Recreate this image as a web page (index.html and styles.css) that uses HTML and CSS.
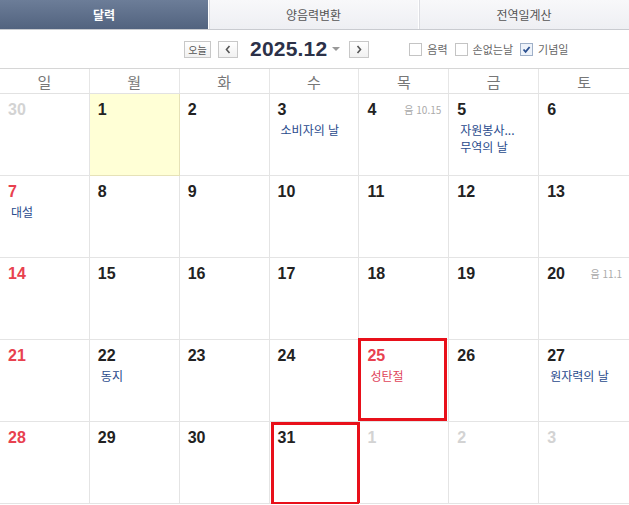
FILE: index.html
```html
<!DOCTYPE html>
<html lang="ko">
<head>
<meta charset="utf-8">
<link rel="stylesheet" href="styles.css">
</head>
<body>
<div class="tabs">
  <div class="tab active">달력</div>
  <div class="tab">양음력변환</div>
  <div class="tab">전역일계산</div>
</div>
<div class="toolbar">
  <button class="btn today">오늘</button>
  <button class="btn arrow"><svg width="8" height="9" viewBox="0 0 8 9"><path d="M5.5 1 L2.5 4.5 L5.5 8" fill="none" stroke="#555" stroke-width="1.6"/></svg></button>
  <div class="title">2025.12</div>
  <span class="caret"></span>
  <button class="btn arrow next"><svg width="8" height="9" viewBox="0 0 8 9"><path d="M2.5 1 L5.5 4.5 L2.5 8" fill="none" stroke="#555" stroke-width="1.6"/></svg></button>
  <label class="chk first"><span class="box"></span>음력</label>
  <label class="chk"><span class="box"></span>손없는날</label>
  <label class="chk"><span class="box on"><svg width="11" height="11" viewBox="0 0 11 11"><path d="M2.5 5.5 L4.6 7.8 L8.6 3" fill="none" stroke="#2a4f8f" stroke-width="1.8"/></svg></span>기념일</label>
</div>
<div class="weekhead">
  <div>일</div><div>월</div><div>화</div><div>수</div><div>목</div><div>금</div><div>토</div>
</div>
<div class="grid">
  <div class="cell"><span class="num other">30</span></div>
  <div class="cell today-cell"><span class="num">1</span></div>
  <div class="cell"><span class="num">2</span></div>
  <div class="cell"><span class="num">3</span><div class="ev">소비자의 날</div></div>
  <div class="cell"><span class="num">4</span><span class="lunar">음 10.15</span></div>
  <div class="cell"><span class="num">5</span><div class="ev">자원봉사...</div><div class="ev">무역의 날</div></div>
  <div class="cell"><span class="num">6</span></div>

  <div class="cell"><span class="num sun">7</span><div class="ev">대설</div></div>
  <div class="cell"><span class="num">8</span></div>
  <div class="cell"><span class="num">9</span></div>
  <div class="cell"><span class="num">10</span></div>
  <div class="cell"><span class="num">11</span></div>
  <div class="cell"><span class="num">12</span></div>
  <div class="cell"><span class="num">13</span></div>

  <div class="cell"><span class="num sun">14</span></div>
  <div class="cell"><span class="num">15</span></div>
  <div class="cell"><span class="num">16</span></div>
  <div class="cell"><span class="num">17</span></div>
  <div class="cell"><span class="num">18</span></div>
  <div class="cell"><span class="num">19</span></div>
  <div class="cell"><span class="num">20</span><span class="lunar">음 11.1</span></div>

  <div class="cell"><span class="num sun">21</span></div>
  <div class="cell"><span class="num">22</span><div class="ev">동지</div></div>
  <div class="cell"><span class="num">23</span></div>
  <div class="cell"><span class="num">24</span></div>
  <div class="cell mark"><span class="num sun">25</span><div class="ev red">성탄절</div></div>
  <div class="cell"><span class="num">26</span></div>
  <div class="cell"><span class="num">27</span><div class="ev">원자력의 날</div></div>

  <div class="cell"><span class="num sun">28</span></div>
  <div class="cell"><span class="num">29</span></div>
  <div class="cell"><span class="num">30</span></div>
  <div class="cell mark2"><span class="num">31</span></div>
  <div class="cell"><span class="num other">1</span></div>
  <div class="cell"><span class="num other">2</span></div>
  <div class="cell"><span class="num other">3</span></div>
</div>
</body>
</html>
```

FILE: styles.css
```css
*, *::before, *::after { box-sizing: border-box; }
body {
  margin: 0;
  width: 629px;
  background: #fff;
  font-family: "Noto Sans CJK KR", "Noto Sans", sans-serif;
  color: #222;
}
.tabs {
  display: grid;
  grid-template-columns: 208px 210px 1fr;
  height: 30px;
  border-bottom: 1px solid #c9cbd0;
}
.tab {
  display: flex;
  align-items: center;
  justify-content: center;
  font-size: 12px;
  color: #555;
  background: linear-gradient(#f8f8fa, #eeeff3);
  border-left: 1px solid #fff;
  box-shadow: inset 1px 0 0 #dcdde2;
}
.tab.active {
  background: linear-gradient(#6c7d98, #52637f);
  color: #fff;
  font-weight: bold;
  border-left: none;
  box-shadow: none;
}
.toolbar {
  display: flex;
  align-items: center;
  height: 38px;
  padding-left: 184px;
}
.btn {
  height: 17px;
  border: 1px solid #c8c8c8;
  background: linear-gradient(#fff, #f1f1f1);
  padding: 0;
  margin: 0;
  font-family: "Noto Sans CJK KR", sans-serif;
  font-size: 10px;
  color: #555;
  display: flex;
  align-items: center;
  justify-content: center;
}
.today { width: 27px; }
.arrow { width: 20px; margin-left: 7px; }
.title {
  margin-left: 12px;
  font-family: "Liberation Sans", Arial, sans-serif;
  font-weight: bold;
  font-size: 21px;
  color: #2c3148;
  letter-spacing: 0.2px;
}
.caret {
  margin-left: 5px;
  width: 0;
  height: 0;
  border-left: 4px solid transparent;
  border-right: 4px solid transparent;
  border-top: 4px solid #999;
}
.next { margin-left: 9px; }
.chk {
  display: flex;
  align-items: center;
  font-size: 11px;
  color: #666;
  margin-left: 7px;
}
.chk.first { margin-left: 40px; }
.box {
  width: 13px;
  height: 13px;
  border: 1px solid #c4c4c4;
  background: #fff;
  margin-right: 5px;
  display: flex;
  align-items: center;
  justify-content: center;
}
.box.on { border-color: #9fb0c8; background: #eef3fa; }
.weekhead {
  display: grid;
  grid-template-columns: repeat(7, 1fr);
  height: 26px;
  border-top: 1px solid #d6d6d6;
  border-bottom: 1px solid #e2e2e2;
}
.weekhead div {
  display: flex;
  align-items: center;
  justify-content: center;
  font-size: 15px;
  color: #777;
  border-right: 1px solid #e6e6e6;
}
.weekhead div:last-child { border-right: none; }
.grid {
  display: grid;
  grid-template-columns: repeat(7, 1fr);
  grid-auto-rows: 82px;
}
.cell {
  position: relative;
  border-right: 1px solid #e4e4e4;
  border-bottom: 1px solid #e4e4e4;
  padding: 6px 0 0 8px;
}
.cell:nth-child(7n) { border-right: none; }
.today-cell {
  background: #ffffd6;
  border-right-color: #e6e2b8;
  border-bottom-color: #e6e2b8;
}
.num {
  display: block;
  font-family: "Liberation Sans", Arial, sans-serif;
  font-weight: bold;
  font-size: 16px;
  line-height: 20px;
  color: #222;
}
.num.sun { color: #e8414f; }
.num.other { color: #d3d3d3; }
.lunar {
  position: absolute;
  top: 8px;
  right: 7px;
  font-size: 10px;
  color: #aaa;
  font-family: "Noto Sans CJK KR", sans-serif;
}
.ev {
  font-size: 12px;
  line-height: 17px;
  color: #2a4b8d;
  padding-left: 3px;
}
.num + .ev { margin-top: 1px; }
.ev.red { color: #e0445a; }
.mark::after,
.mark2::after {
  content: "";
  position: absolute;
  width: 89px;
  height: 83px;
  border: 3px solid #e8101a;
}
.mark::after { top: -2px; left: -1px; }
.mark2::after { top: 0; left: 1px; }
```
